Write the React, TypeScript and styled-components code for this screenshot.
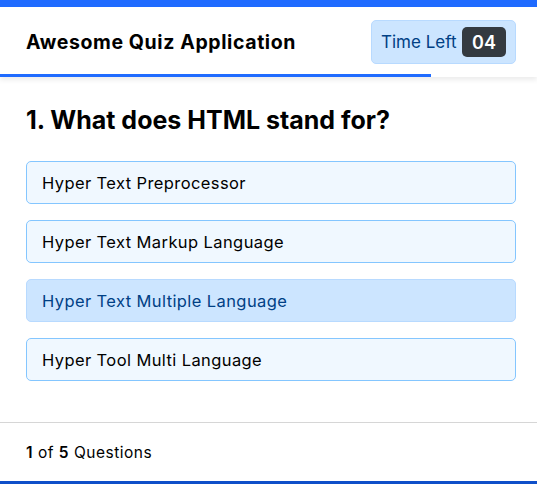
import React from "react";
import styled, { createGlobalStyle } from "styled-components";

const GlobalStyle = createGlobalStyle`
  * { box-sizing: border-box; }
  body {
    margin: 0;
    background: #fff;
    font-family: Inter, "Open Sans", sans-serif;
    color: #000;
  }
`;

const Card = styled.div`
  width: 537px;
  height: 484px;
  display: flex;
  flex-direction: column;
  border-top: 7px solid #1f6bff;
  border-bottom: 3px solid #0f4fc9;
  background: #fff;
`;

const Header = styled.header`
  position: relative;
  height: 70px;
  padding: 0 21px 0 26px;
  display: flex;
  align-items: center;
  justify-content: space-between;
  box-shadow: 0 3px 5px rgba(0, 0, 0, 0.08);
`;

const Title = styled.h1`
  margin: 0;
  font-size: 19.5px;
  font-weight: 700;
  letter-spacing: 0.6px;
`;

const Timer = styled.div`
  height: 44px;
  width: 145px;
  display: flex;
  align-items: center;
  justify-content: space-between;
  padding: 0 9px 0 9px;
  background: #cce5ff;
  border: 1px solid #b8daff;
  border-radius: 5px;
  color: #004085;
  font-size: 17px;
`;

const Seconds = styled.span`
  width: 44px;
  height: 30px;
  display: flex;
  align-items: center;
  justify-content: center;
  background: #343a40;
  color: #fff;
  border-radius: 5px;
  font-weight: 600;
  font-size: 18px;
`;

const Progress = styled.div`
  position: absolute;
  left: 0;
  bottom: 0;
  height: 3px;
  background: #1f6bff;
`;

const Body = styled.section`
  flex: 1;
  padding: 25px 21px 0 26px;
`;

const Question = styled.h2`
  margin: 0 0 23px;
  font-size: 25px;
  font-weight: 700;
  line-height: 36px;
`;

const OptionList = styled.div`
  display: flex;
  flex-direction: column;
  gap: 16px;
`;

const Option = styled.div<{ selected?: boolean }>`
  height: 43px;
  display: flex;
  align-items: center;
  padding: 0 15px;
  border-radius: 5px;
  font-size: 16.5px;
  letter-spacing: 0.4px;
  background: ${(p) => (p.selected ? "#cce5ff" : "#f0f8ff")};
  border: 1px solid ${(p) => (p.selected ? "#b8daff" : "#84c6ff")};
  color: ${(p) => (p.selected ? "#004085" : "#000")};
`;

const Footer = styled.footer`
  height: 59px;
  border-top: 1px solid #d6d6d6;
  display: flex;
  align-items: center;
  padding: 0 26px;
  font-size: 15.5px;
  letter-spacing: 0.5px;
`;

const Strong = styled.b`
  font-weight: 600;
`;

const options = [
  "Hyper Text Preprocessor",
  "Hyper Text Markup Language",
  "Hyper Text Multiple Language",
  "Hyper Tool Multi Language",
];

export default function App() {
  return (
    <>
      <GlobalStyle />
      <Card>
        <Header>
          <Title>Awesome Quiz Application</Title>
          <Timer>
            Time Left
            <Seconds>04</Seconds>
          </Timer>
          <Progress style={{ width: `${(431 / 537) * 100}%` }} />
        </Header>
        <Body>
          <Question>1. What does HTML stand for?</Question>
          <OptionList>
            {options.map((o, i) => (
              <Option key={o} selected={i === 2}>
                {o}
              </Option>
            ))}
          </OptionList>
        </Body>
        <Footer>
          <span>
            <Strong>1</Strong> of <Strong>5</Strong> Questions
          </span>
        </Footer>
      </Card>
    </>
  );
}
